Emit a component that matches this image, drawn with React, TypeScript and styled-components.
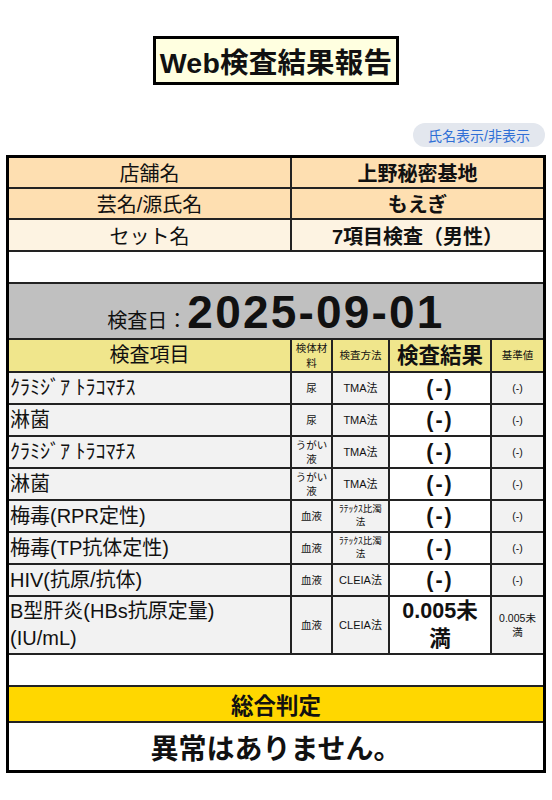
import React from "react";
import styled, { createGlobalStyle } from "styled-components";

const GlobalStyle = createGlobalStyle`
  html, body { margin: 0; padding: 0; background: #ffffff; }
  body {
    font-family: "Liberation Sans", "Noto Sans CJK JP", sans-serif;
    color: #111111;
  }
  * { box-sizing: border-box; }
`;

const FONT = `"Liberation Sans", "Noto Sans CJK JP", sans-serif`;

const Page = styled.div`
  width: 552px;
  padding: 36px 6px 26px;
  display: flex;
  flex-direction: column;
`;

const TitleWrap = styled.div`
  display: flex;
  justify-content: center;
`;

const Title = styled.h1`
  margin: 0;
  height: 49px;
  padding: 0 4px;
  display: flex;
  align-items: center;
  border: 3px solid #000;
  background: #ffffe0;
  font-family: ${FONT};
  font-size: 28.5px;
  font-weight: 700;
  color: #111;
  letter-spacing: 0.2px;
`;

const ToggleRow = styled.div`
  display: flex;
  justify-content: flex-end;
  margin-top: 38px;
  margin-bottom: 8px;
`;

const ToggleButton = styled.button`
  height: 24px;
  width: 132px;
  margin-right: 1px;
  border: none;
  border-radius: 12px;
  background: #e3e7ee;
  color: #2f6fd6;
  font-family: ${FONT};
  font-size: 14px;
  padding: 0;
  cursor: pointer;
`;

const Sheet = styled.div`
  width: 540px;
  border: 3px solid #000;
  display: flex;
  flex-direction: column;
`;

const InfoRow = styled.div<{ $bg: string; $h: number }>`
  display: grid;
  grid-template-columns: 281px 1fr;
  height: ${(p) => p.$h}px;
  background: ${(p) => p.$bg};
  border-bottom: 2px solid #222;
`;

const InfoCell = styled.div<{ $bold?: boolean; $divider?: boolean }>`
  display: flex;
  align-items: center;
  justify-content: center;
  font-size: 20px;
  font-weight: ${(p) => (p.$bold ? 700 : 400)};
  border-left: ${(p) => (p.$divider ? "2px solid #222" : "none")};
`;

const BlankRow = styled.div<{ $h: number }>`
  height: ${(p) => p.$h}px;
  background: #fff;
  border-bottom: 2px solid #222;
`;

const DateRow = styled.div`
  height: 56px;
  background: #c0c0c0;
  border-bottom: 2px solid #222;
  display: flex;
  justify-content: center;
  align-items: baseline;
  line-height: 56px;
`;

const DateLabel = styled.span`
  font-size: 20px;
`;

const DateValue = styled.span`
  font-size: 46px;
  font-weight: 700;
  letter-spacing: 2.2px;
`;

const TestRow = styled.div<{ $h: number; $bg: string }>`
  display: grid;
  grid-template-columns: 281px 41px 57px 102px 53px;
  height: ${(p) => p.$h}px;
  background: ${(p) => p.$bg};
  border-bottom: 2px solid #222;
`;

const ItemCell = styled.div<{ $center?: boolean }>`
  display: flex;
  align-items: center;
  justify-content: ${(p) => (p.$center ? "center" : "flex-start")};
  text-align: ${(p) => (p.$center ? "center" : "left")};
  font-size: 20px;
  line-height: 27px;
  padding-left: ${(p) => (p.$center ? 0 : 1)}px;
`;

const SmallCell = styled.div<{ $size?: number }>`
  display: flex;
  align-items: center;
  justify-content: center;
  text-align: center;
  border-left: 2px solid #222;
  font-size: ${(p) => p.$size ?? 10.5}px;
  line-height: 1.35;
  padding: 0 3px;
  word-break: break-all;
`;

const ResultCell = styled.div<{ $white?: boolean; $spaced?: boolean }>`
  display: flex;
  align-items: center;
  justify-content: center;
  text-align: center;
  border-left: 2px solid #222;
  background: ${(p) => (p.$white ? "#ffffff" : "transparent")};
  font-size: 21.5px;
  font-weight: 700;
  line-height: 28px;
  letter-spacing: ${(p) => (p.$spaced ? "2px" : "0")};
  padding: 0 5px;
`;

const VerdictHead = styled.div`
  height: 36px;
  background: #ffd700;
  border-bottom: 2px solid #222;
  display: flex;
  align-items: center;
  justify-content: center;
  font-size: 22.5px;
  font-weight: 700;
`;

const VerdictBody = styled.div`
  height: 47px;
  background: #fff;
  display: flex;
  align-items: center;
  justify-content: center;
  font-size: 28px;
  font-weight: 700;
`;

type Test = {
  name: React.ReactNode;
  specimen: string;
  method: string;
  methodSize?: number;
  result: string;
  reference: string;
  h: number;
};

const tests: Test[] = [
  { name: "ｸﾗﾐｼﾞｱ ﾄﾗｺﾏﾁｽ", specimen: "尿", method: "TMA法", methodSize: 11, result: "(-)", reference: "(-)", h: 32 },
  { name: "淋菌", specimen: "尿", method: "TMA法", methodSize: 11, result: "(-)", reference: "(-)", h: 32 },
  { name: "ｸﾗﾐｼﾞｱ ﾄﾗｺﾏﾁｽ", specimen: "うがい液", method: "TMA法", methodSize: 11, result: "(-)", reference: "(-)", h: 32 },
  { name: "淋菌", specimen: "うがい液", method: "TMA法", methodSize: 11, result: "(-)", reference: "(-)", h: 32 },
  { name: "梅毒(RPR定性)", specimen: "血液", method: "ﾗﾃｯｸｽ比濁法", methodSize: 9.5, result: "(-)", reference: "(-)", h: 32 },
  { name: "梅毒(TP抗体定性)", specimen: "血液", method: "ﾗﾃｯｸｽ比濁法", methodSize: 9.5, result: "(-)", reference: "(-)", h: 32 },
  { name: "HIV(抗原/抗体)", specimen: "血液", method: "CLEIA法", methodSize: 11, result: "(-)", reference: "(-)", h: 32 },
  {
    name: (
      <>
        B型肝炎(HBs抗原定量)
        <br />
        (IU/mL)
      </>
    ),
    specimen: "血液",
    method: "CLEIA法",
    methodSize: 11,
    result: "0.005未満",
    reference: "0.005未満",
    h: 58,
  },
];

export default function App() {
  return (
    <>
      <GlobalStyle />
      <Page>
        <TitleWrap>
          <Title>Web検査結果報告</Title>
        </TitleWrap>
        <ToggleRow>
          <ToggleButton type="button">氏名表示/非表示</ToggleButton>
        </ToggleRow>
        <Sheet>
          <InfoRow $bg="#fedfb1" $h={31}>
            <InfoCell>店舗名</InfoCell>
            <InfoCell $bold $divider>上野秘密基地</InfoCell>
          </InfoRow>
          <InfoRow $bg="#fedfb1" $h={31}>
            <InfoCell>芸名/源氏名</InfoCell>
            <InfoCell $bold $divider>もえぎ</InfoCell>
          </InfoRow>
          <InfoRow $bg="#fdf3e2" $h={32}>
            <InfoCell>セット名</InfoCell>
            <InfoCell $bold $divider>7項目検査（男性）</InfoCell>
          </InfoRow>
          <BlankRow $h={32} />
          <DateRow>
            <DateLabel>検査日：</DateLabel>
            <DateValue>2025-09-01</DateValue>
          </DateRow>
          <TestRow $h={33} $bg="#f0e68c">
            <ItemCell $center>検査項目</ItemCell>
            <SmallCell>検体材料</SmallCell>
            <SmallCell>検査方法</SmallCell>
            <ResultCell>検査結果</ResultCell>
            <SmallCell>基準値</SmallCell>
          </TestRow>
          {tests.map((t, i) => (
            <TestRow key={i} $h={t.h} $bg="#f2f2f2">
              <ItemCell>{t.name}</ItemCell>
              <SmallCell>{t.specimen}</SmallCell>
              <SmallCell $size={t.methodSize}>{t.method}</SmallCell>
              <ResultCell $white $spaced={t.result === "(-)"}>
                {t.result}
              </ResultCell>
              <SmallCell>{t.reference}</SmallCell>
            </TestRow>
          ))}
          <BlankRow $h={32} />
          <VerdictHead>総合判定</VerdictHead>
          <VerdictBody>異常はありません。</VerdictBody>
        </Sheet>
      </Page>
    </>
  );
}
